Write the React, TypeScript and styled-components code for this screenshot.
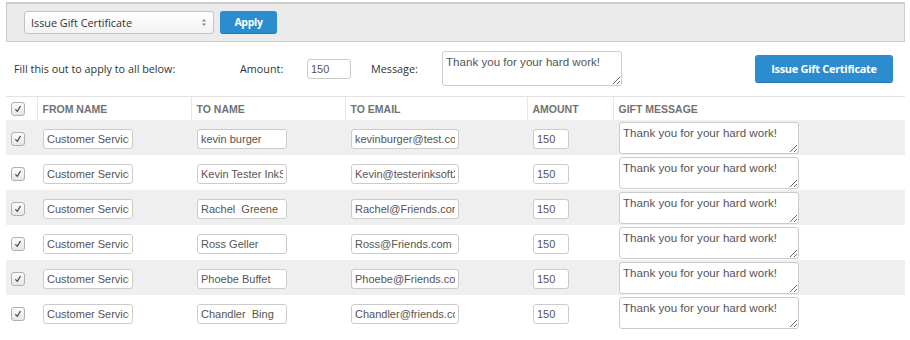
import styled, { createGlobalStyle } from 'styled-components'

const GlobalStyle = createGlobalStyle`
  body {
    margin: 0;
    background: #fff;
    font-family: "Open Sans", "Liberation Sans", sans-serif;
  }
`

type Recipient = {
  toName: string
  email: string
}

const recipients: Recipient[] = [
  { toName: 'kevin burger', email: 'kevinburger@test.com' },
  { toName: 'Kevin Tester InkSoft', email: 'Kevin@testerinksoft2.com' },
  { toName: 'Rachel  Greene', email: 'Rachel@Friends.com' },
  { toName: 'Ross Geller', email: 'Ross@Friends.com' },
  { toName: 'Phoebe Buffet', email: 'Phoebe@Friends.com' },
  { toName: 'Chandler  Bing', email: 'Chandler@friends.com' },
]

function CheckBox() {
  return (
    <Check>
      <svg width="10" height="10" viewBox="0 0 10 10">
        <path d="M2.6 5.6 L4.3 7.4 L7.3 2.4" fill="none" stroke="#505050" strokeWidth="1.2" strokeLinecap="round" strokeLinejoin="round" />
      </svg>
    </Check>
  )
}

function App() {
  return (
    <>
      <GlobalStyle />
      <Page>
        <ActionBar>
          <SelectBox>
            <span>Issue Gift Certificate</span>
            <svg width="6" height="9" viewBox="0 0 6 9">
              <path d="M0.8 3.6 L3 1 L5.2 3.6 Z M0.8 5.4 L3 8 L5.2 5.4 Z" fill="#8a8a8a" />
            </svg>
          </SelectBox>
          <BlueButton $small>Apply</BlueButton>
        </ActionBar>

        <FillRow>
          <FillText>Fill this out to apply to all below:</FillText>
          <FieldLabel $width={67}>Amount:</FieldLabel>
          <TextInput $width={44} defaultValue="150" />
          <FieldLabel $width={71} $gap={20}>Message:</FieldLabel>
          <MessageBox defaultValue="Thank you for your hard work!" $height={35} />
          <BlueButton>Issue Gift Certificate</BlueButton>
        </FillRow>

        <Table>
          <colgroup>
            <col style={{ width: 31 }} />
            <col style={{ width: 154 }} />
            <col style={{ width: 154 }} />
            <col style={{ width: 182 }} />
            <col style={{ width: 86 }} />
            <col style={{ width: 292 }} />
          </colgroup>
          <thead>
            <tr>
              <HeadCell><CheckBox /></HeadCell>
              <HeadCell>From Name</HeadCell>
              <HeadCell>To Name</HeadCell>
              <HeadCell>To Email</HeadCell>
              <HeadCell>Amount</HeadCell>
              <HeadCell>Gift Message</HeadCell>
            </tr>
          </thead>
          <tbody>
            {recipients.map((r, i) => (
              <Row key={i} $shaded={i % 2 === 0}>
                <Cell><CheckBox /></Cell>
                <Cell><TextInput $width={90} defaultValue="Customer Service" /></Cell>
                <Cell><TextInput $width={90} defaultValue={r.toName} /></Cell>
                <Cell><TextInput $width={108} defaultValue={r.email} /></Cell>
                <Cell><TextInput $width={36} defaultValue="150" /></Cell>
                <Cell><MessageBox defaultValue="Thank you for your hard work!" $height={32} /></Cell>
              </Row>
            ))}
          </tbody>
        </Table>
      </Page>
    </>
  )
}

export default App

const Page = styled.div`
  width: 899px;
  padding: 2px 0 0 6px;
`

const ActionBar = styled.div`
  display: flex;
  align-items: center;
  gap: 6px;
  height: 37px;
  padding-left: 17px;
  background: #ebebeb;
  border: 1px solid #cdcdcd;
  border-top-width: 2px;
`

const SelectBox = styled.div`
  width: 190px;
  height: 23px;
  box-sizing: border-box;
  display: flex;
  align-items: center;
  justify-content: space-between;
  padding: 0 6px 0 6px;
  background: linear-gradient(#ffffff, #f3f3f3);
  border: 1px solid #c4c4c4;
  border-radius: 3px;
  font-size: 10.8px;
  color: #333;
`

const BlueButton = styled.button<{ $small?: boolean }>`
  height: ${p => (p.$small ? 23 : 28)}px;
  width: ${p => (p.$small ? 57 : 138)}px;
  margin-left: ${p => (p.$small ? 0 : 'auto')};
  margin-right: ${p => (p.$small ? 0 : 12)}px;
  padding: 0;
  border: none;
  border-radius: 3px;
  background: #2b8dcf;
  border-bottom: 1px solid #2579b3;
  color: #fff;
  font-family: "Open Sans", sans-serif;
  font-weight: 700;
  font-size: ${p => (p.$small ? 10.5 : 11)}px;
  letter-spacing: -0.3px;
  cursor: pointer;
`

const FillRow = styled.div`
  display: flex;
  align-items: center;
  height: 35px;
  margin-top: 9px;
  padding-left: 8px;
  font-size: 10.8px;
  color: #333;
`

const FillText = styled.span`
  width: 226px;
`

const FieldLabel = styled.span<{ $width: number; $gap?: number }>`
  width: ${p => p.$width}px;
  margin-left: ${p => p.$gap ?? 0}px;
`

const TextInput = styled.input<{ $width: number }>`
  width: ${p => p.$width}px;
  height: 20px;
  box-sizing: border-box;
  padding: 0 3px;
  border: 1px solid #cbcbcb;
  border-radius: 3px;
  background: #fff;
  font-family: "Liberation Sans", Arial, sans-serif;
  font-size: 11px;
  color: #555;
  outline: none;
  vertical-align: middle;
`

const MessageBox = styled.textarea<{ $height: number }>`
  display: block;
  width: 180px;
  height: ${p => p.$height}px;
  box-sizing: border-box;
  padding: 3px 3px;
  border: 1px solid #cbcbcb;
  border-radius: 3px;
  background: #fff;
  font-family: "Liberation Sans", Arial, sans-serif;
  font-size: 11.6px;
  color: #555;
  outline: none;
`

const Table = styled.table`
  width: 899px;
  margin-top: 10px;
  border-collapse: collapse;
  table-layout: fixed;
`

const HeadCell = styled.th`
  height: 23px;
  padding: 0 5px;
  border-top: 1px solid #e3e3e3;
  border-left: 1px solid #e6e6e6;
  text-align: left;
  text-transform: uppercase;
  font-family: "Liberation Sans", Arial, sans-serif;
  font-size: 10.5px;
  font-weight: 700;
  color: #727272;
  vertical-align: middle;

  &:first-child {
    border-left: none;
  }
`

const Row = styled.tr<{ $shaded: boolean }>`
  background: ${p => (p.$shaded ? '#efefef' : '#fff')};
`

const Cell = styled.td`
  height: 35px;
  padding: 0 6px;
  vertical-align: middle;

  &:first-child {
    padding-left: 5px;
  }
`

const Check = styled.span`
  display: inline-flex;
  align-items: center;
  justify-content: center;
  width: 14px;
  height: 14px;
  box-sizing: border-box;
  border: 1px solid #b0b0b0;
  border-radius: 3px;
  background: linear-gradient(#fdfdfd, #e6e6e6);
  vertical-align: middle;
`
